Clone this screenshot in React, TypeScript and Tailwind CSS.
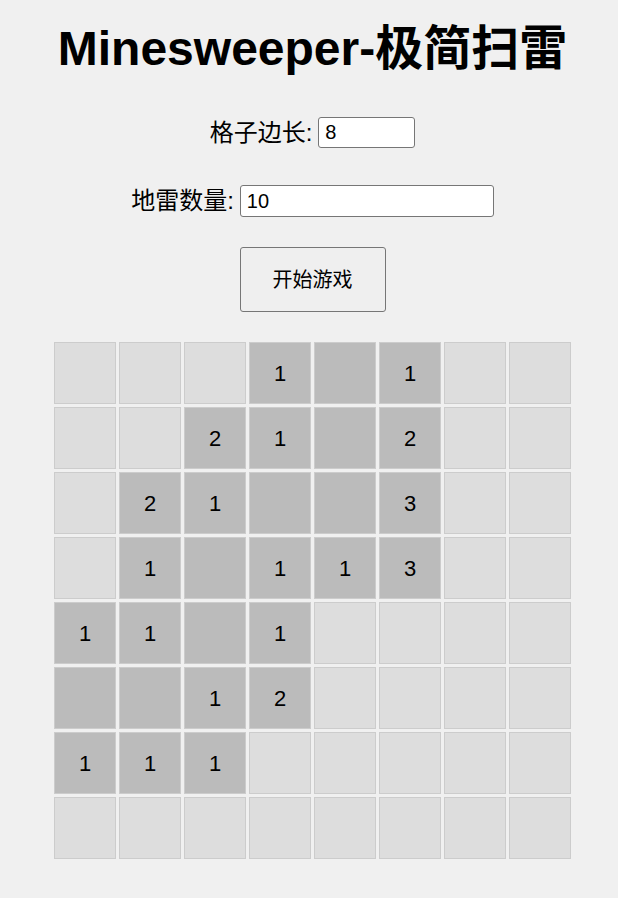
const F = '"Liberation Sans", "Noto Sans CJK SC", sans-serif';

// 0 = hidden, -1 = revealed empty, n = revealed with number
const board: number[][] = [
  [0, 0, 0, 1, -1, 1, 0, 0],
  [0, 0, 2, 1, -1, 2, 0, 0],
  [0, 2, 1, -1, -1, 3, 0, 0],
  [0, 1, -1, 1, 1, 3, 0, 0],
  [1, 1, -1, 1, 0, 0, 0, 0],
  [-1, -1, 1, 2, 0, 0, 0, 0],
  [1, 1, 1, 0, 0, 0, 0, 0],
  [0, 0, 0, 0, 0, 0, 0, 0],
];

const App = () => {
  return (
    <div className="min-h-[898px] bg-[#f0f0f0] text-black pl-[7px] flex flex-col items-center" style={{ fontFamily: F }}>
      <h1 className="pt-[21px] text-[48px] leading-[56px] font-bold">Minesweeper-极简扫雷</h1>

      <div className="mt-[40px] h-[31px] flex items-center gap-[6px]">
        <label className="text-[24px] leading-none">格子边长:</label>
        <input
          className="w-[97px] h-[31px] bg-white border border-[#767676] rounded-[3px] px-[6px] text-[20px] outline-none"
          defaultValue="8"
        />
      </div>

      <div className="mt-[37px] h-[32px] flex items-center gap-[6px]">
        <label className="text-[24px] leading-none">地雷数量:</label>
        <input
          className="w-[254px] h-[32px] bg-white border border-[#767676] rounded-[3px] px-[6px] text-[20px] outline-none"
          defaultValue="10"
        />
      </div>

      <button className="mt-[30px] w-[146px] h-[65px] bg-[#efefef] border border-[#767676] rounded-[3px] text-[20px]">
        开始游戏
      </button>

      <div className="mt-[30px] grid grid-cols-8 gap-[3px]">
        {board.flat().map((v, i) => (
          <div
            key={i}
            className={
              "w-[62px] h-[62px] border border-[#cccccc] flex items-center justify-center text-[22px] " +
              (v === 0 ? "bg-[#dddddd]" : "bg-[#bbbbbb]")
            }
          >
            {v > 0 ? v : ""}
          </div>
        ))}
      </div>
    </div>
  );
};

export default App;
